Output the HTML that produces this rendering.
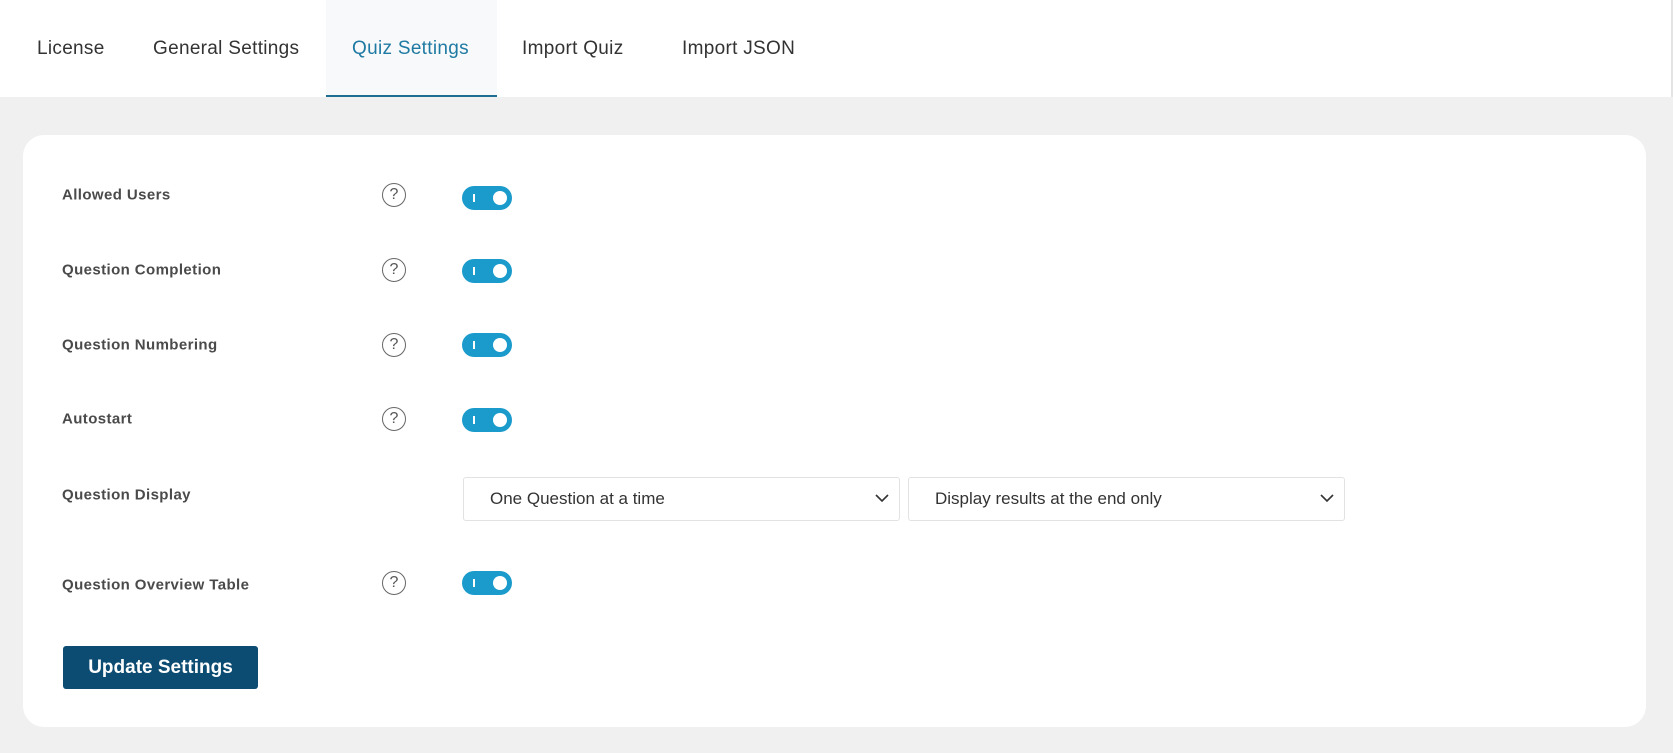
<!DOCTYPE html>
<html><head><meta charset="utf-8"><style>
*{box-sizing:border-box;margin:0;padding:0}
body{width:1673px;height:753px;background:#f0f0f1;font-family:"Liberation Sans",sans-serif;position:relative;overflow:hidden}
.hdr{position:absolute;left:0;top:0;width:1673px;height:97px;background:#fff;border-right:2px solid #e4e4e4}
.tab{position:absolute;top:38px;font-size:19px;color:#333;letter-spacing:0.3px}
.active{position:absolute;left:326px;top:0;width:171px;height:97px;background:#f8f9fa;border-bottom:2px solid #1f6e93}
.card{position:absolute;left:23px;top:135px;width:1623px;height:592px;background:#fff;border-radius:21px}
.lbl{position:absolute;left:62px;font-size:15px;font-weight:bold;color:#4a4a4a;transform:translateY(-50%);letter-spacing:0.4px}
.help{position:absolute;left:382px;width:24px;height:24px;border:1.5px solid #666;border-radius:50%;text-align:center;font-size:16px;line-height:21px;color:#555;transform:translateY(-50%)}
.tog{position:absolute;left:462px;width:50px;height:24px;border-radius:12px;background:#1a9bcb;transform:translateY(-50%)}
.tog:before{content:"";position:absolute;left:11px;top:8px;width:2px;height:8px;background:#fff}
.tog:after{content:"";position:absolute;right:5px;top:5px;width:14px;height:14px;border-radius:50%;background:#fff}
.sel{position:absolute;top:477px;height:44px;border:1px solid #e2e2e2;border-radius:3px;font-size:17px;color:#333;line-height:42px;padding-left:26px}
.sel svg{position:absolute;right:10px;top:15px}
.btn{position:absolute;left:63px;top:646px;width:195px;height:43px;background:#0c4b72;border-radius:3px;color:#fff;font-weight:bold;font-size:19px;text-align:center;line-height:43px}
</style></head><body>
<div class="hdr">
<div class="active"></div>
<div class="tab" style="left:37px">License</div>
<div class="tab" style="left:153px">General Settings</div>
<div class="tab" style="left:352px;color:#1f7aa3">Quiz Settings</div>
<div class="tab" style="left:522px">Import Quiz</div>
<div class="tab" style="left:682px">Import JSON</div>
</div>
<div class="card"></div>
<div class="lbl" style="top:195px">Allowed Users</div><div class="help" style="top:195px">?</div><div class="tog" style="top:198px"></div>
<div class="lbl" style="top:270px">Question Completion</div><div class="help" style="top:270px">?</div><div class="tog" style="top:271px"></div>
<div class="lbl" style="top:345px">Question Numbering</div><div class="help" style="top:345px">?</div><div class="tog" style="top:345px"></div>
<div class="lbl" style="top:419px">Autostart</div><div class="help" style="top:419px">?</div><div class="tog" style="top:420px"></div>
<div class="lbl" style="top:495px">Question Display</div>
<div class="sel" style="left:463px;width:437px">One Question at a time<svg width="14" height="10"><path d="M1 2 L7 8 L13 2" stroke="#333" stroke-width="1.6" fill="none"/></svg></div>
<div class="sel" style="left:908px;width:437px">Display results at the end only<svg width="14" height="10"><path d="M1 2 L7 8 L13 2" stroke="#333" stroke-width="1.6" fill="none"/></svg></div>
<div class="lbl" style="top:585px">Question Overview Table</div><div class="help" style="top:583px">?</div><div class="tog" style="top:583px"></div>
<div class="btn">Update Settings</div>
</body></html>
